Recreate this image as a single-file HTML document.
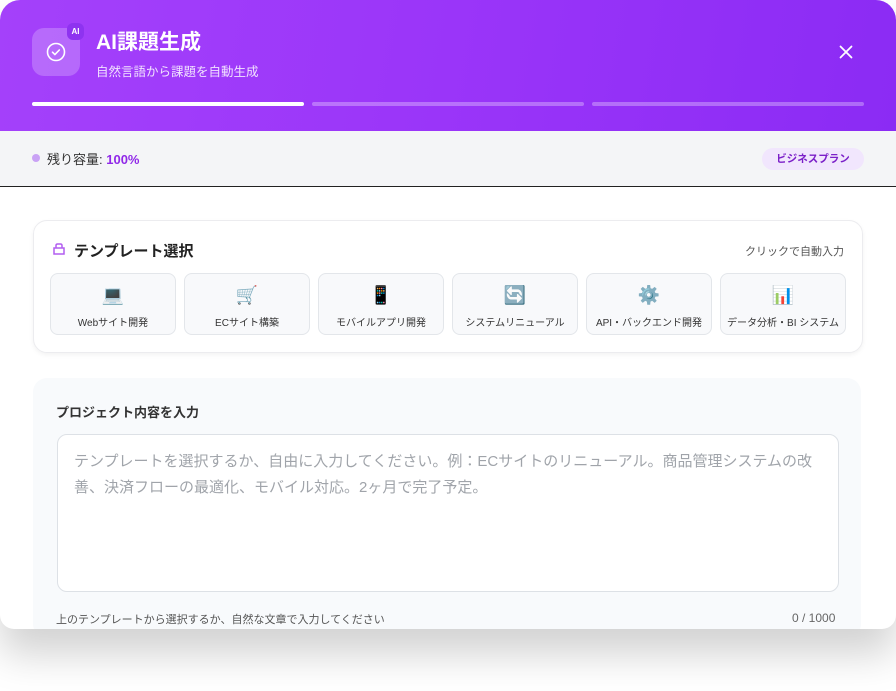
<!DOCTYPE html>
<html><head><meta charset="utf-8"><style>
*{box-sizing:border-box;margin:0;padding:0}
body{width:896px;height:691px;background:#fff;font-family:"Liberation Sans","Noto Sans CJK JP",sans-serif;overflow:hidden;position:relative}
.modal{position:absolute;left:0;top:0;width:896px;height:629px;background:#fff;border-radius:20px 20px 14px 14px;overflow:hidden;box-shadow:0 25px 40px rgba(0,0,0,0.18)}
.hdr{height:131px;background:linear-gradient(100deg,#a441fa 0%,#9a35f9 50%,#8b2bf4 100%);position:relative;color:#fff}
.ico{position:absolute;left:32px;top:28px;width:48px;height:48px;border-radius:12px;background:rgba(255,255,255,0.22)}
.ai{position:absolute;left:67px;top:23px;width:17px;height:17px;border-radius:6px;background:#8e33f0;font-size:8px;font-weight:bold;text-align:center;line-height:17px}
.title{position:absolute;left:96px;top:26px;font-size:21px;font-weight:bold}
.sub{position:absolute;left:96px;top:61px;font-size:12.5px;color:rgba(255,255,255,0.85)}
.x{position:absolute;left:839px;top:45px}
.bar{position:absolute;top:102px;height:4px;width:272px;border-radius:2px;background:rgba(255,255,255,0.3)}
.status{height:56px;background:#f4f5f7;border-bottom:1px solid #222;position:relative}
.card{position:absolute;left:33px;top:220px;width:830px;height:133px;border:1px solid #ececef;border-radius:14px;box-shadow:0 2px 5px rgba(0,0,0,0.05)}
.tb{position:absolute;top:273px;width:126px;height:62px;border:1px solid #e3e6ea;border-radius:8px;background:#f8f9fb;text-align:center;font-size:10px;color:#333}
.tb .e{display:block;font-size:18px;height:22px;margin-top:10px;line-height:22px}
.tb .l{display:block;margin-top:8px}
.inp{position:absolute;left:33px;top:378px;width:828px;height:260px;background:#f8fafc;border-radius:14px}
.ta{position:absolute;left:57px;top:434px;width:782px;height:158px;background:#fff;border:1.5px solid #dde1e6;border-radius:10px;padding:14px 16px;font-size:15px;line-height:26px;color:#a0a4aa}
</style></head><body>
<div class="modal">
<div class="hdr">
<div class="ico"><svg width="48" height="48"><circle cx="24" cy="24" r="8.5" fill="none" stroke="#fff" stroke-width="1.6"/><path d="M20.5 24.2l2.4 2.4 4.4-4.6" fill="none" stroke="#fff" stroke-width="1.6" stroke-linecap="round" stroke-linejoin="round"/></svg></div>
<div class="ai">AI</div>
<div class="title">AI課題生成</div>
<div class="sub">自然言語から課題を自動生成</div>
<div class="x"><svg width="14" height="14"><path d="M1.5 1.5l11 11M12.5 1.5l-11 11" stroke="#fff" stroke-width="1.8" stroke-linecap="round"/></svg></div>
<div class="bar" style="left:32px;background:#fff"></div>
<div class="bar" style="left:312px"></div>
<div class="bar" style="left:592px"></div>
</div>
<div class="status">
<span style="position:absolute;left:32px;top:23px;width:8px;height:8px;border-radius:50%;background:#c9a2f5"></span>
<span style="position:absolute;left:47px;top:18px;font-size:13px;color:#333">残り容量: <b style="color:#9028e8">100%</b></span>
<span style="position:absolute;left:762px;top:17px;width:102px;height:22px;border-radius:11px;background:#f1e6fd;color:#7b1fc8;font-size:10.5px;font-weight:bold;text-align:center;line-height:22px">ビジネスプラン</span>
</div>
<div class="card">
<svg style="position:absolute;left:18px;top:21px" width="14" height="14"><path d="M2 6h10v6H2zM4 6V3.5Q4 2 5.5 2h3Q10 2 10 3.5V6" fill="none" stroke="#b25ef0" stroke-width="1.5"/></svg>
<span style="position:absolute;left:40px;top:19px;font-size:15px;font-weight:bold;color:#222">テンプレート選択</span>
<span style="position:absolute;right:18px;top:22px;font-size:11px;color:#555">クリックで自動入力</span>
</div>
<div class="tb" style="left:50px"><span class="e">💻</span><span class="l">Webサイト開発</span></div>
<div class="tb" style="left:184px"><span class="e">🛒</span><span class="l">ECサイト構築</span></div>
<div class="tb" style="left:318px"><span class="e">📱</span><span class="l">モバイルアプリ開発</span></div>
<div class="tb" style="left:452px"><span class="e">🔄</span><span class="l">システムリニューアル</span></div>
<div class="tb" style="left:586px"><span class="e">⚙️</span><span class="l">API・バックエンド開発</span></div>
<div class="tb" style="left:720px"><span class="e">📊</span><span class="l">データ分析・BI システム</span></div>
<div class="inp"></div>
<span style="position:absolute;left:56px;top:402px;font-size:13px;font-weight:bold;color:#333">プロジェクト内容を入力</span>
<div class="ta">テンプレートを選択するか、自由に入力してください。例：ECサイトのリニューアル。商品管理システムの改善、決済フローの最適化、モバイル対応。2ヶ月で完了予定。</div>
<span style="position:absolute;left:56px;top:611px;font-size:11px;color:#555">上のテンプレートから選択するか、自然な文章で入力してください</span>
<span style="position:absolute;left:792px;top:611px;font-size:12px;color:#666">0 / 1000</span>
</div>
</body></html>
